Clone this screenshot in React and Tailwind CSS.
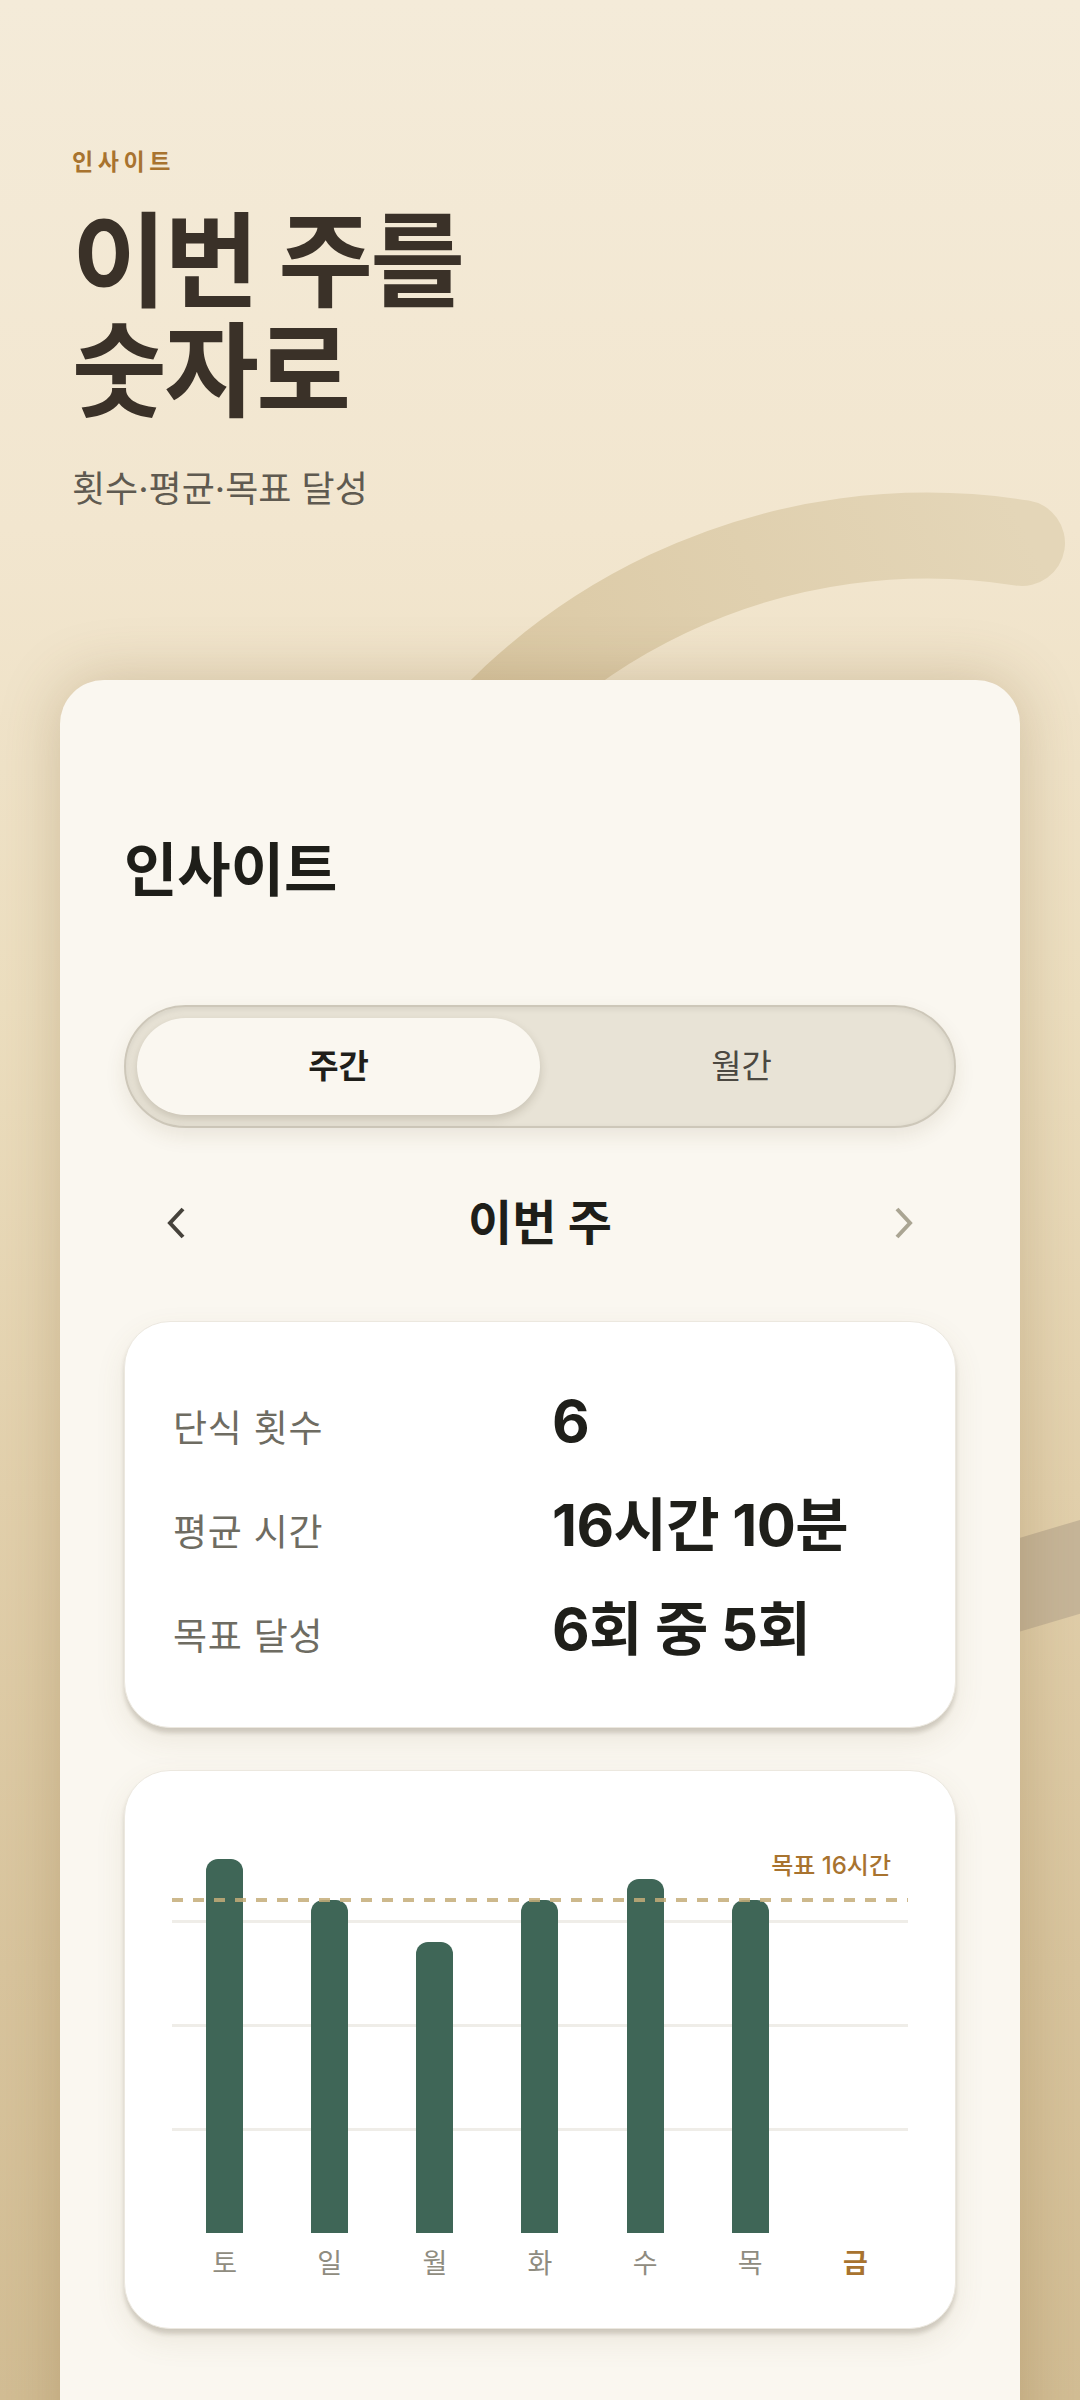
import React from 'react';

const days = [
    { label: '토', hours: 18 },
    { label: '일', hours: 16 },
    { label: '월', hours: 14 },
    { label: '화', hours: 16 },
    { label: '수', hours: 17 },
    { label: '목', hours: 16 },
    { label: '금', hours: 0, today: true },
];

const HOUR_PX = 20.8;

const stats = [
    { label: '단식 횟수', value: '6' },
    { label: '평균 시간', value: '16시간 10분' },
    { label: '목표 달성', value: '6회 중 5회' },
];

const Chevron = ({ dir = 'left', color }) => (
    <svg width="20" height="32" viewBox="0 0 20 32" fill="none">
        <path
            d={dir === 'left' ? 'M17 2 L4 16 L17 30' : 'M3 2 L16 16 L3 30'}
            stroke={color}
            strokeWidth="4"
            strokeLinejoin="miter"
        />
    </svg>
);

const BackgroundArcs = () => (
    <svg className="absolute inset-0" width="1080" height="2400" viewBox="0 0 1080 2400" fill="none">
        <defs>
            <linearGradient id="arcFill" x1="400" y1="840" x2="1030" y2="540" gradientUnits="userSpaceOnUse">
                <stop offset="0" stopColor="#d9c6a0" />
                <stop offset="1" stopColor="#e4d6b8" />
            </linearGradient>
        </defs>
        <path d="M 404 835 A 607 607 0 0 1 1022 543" stroke="url(#arcFill)" strokeWidth="86" strokeLinecap="round" />
        <path d="M 800 1650 L 1130 1552" stroke="#c6b598" strokeWidth="90" />
    </svg>
);

const cardShadow = 'shadow-[0_5px_4px_rgba(60,50,30,0.18),0_12px_30px_rgba(120,100,60,0.10)]';

const StatsCard = () => (
    <div className={`mt-[66px] rounded-[46px] bg-white border border-[#ece8df] ${cardShadow} pl-[48px] pt-[64px] pb-[63px] flex flex-col gap-[34px]`}>
        {stats.map((s) => (
            <div key={s.label} className="h-[70px] flex items-baseline">
                <div className="w-[379px] text-[37px] leading-[70px] tracking-[0.02em] text-[#6e6c62]">{s.label}</div>
                <div className="text-[58px] leading-[70px] font-bold tracking-[-0.01em] text-[#1f1f1a]">{s.value}</div>
            </div>
        ))}
    </div>
);

const ChartCard = () => (
    <div className={`mt-[42px] rounded-[46px] bg-white border border-[#ece8df] ${cardShadow} px-[47px] pt-[46px] pb-[46px]`}>
        <div className="relative h-[416px]">
            {[102, 206, 310].map((b) => (
                <div key={b} className="absolute left-0 right-0 h-[3px] bg-[#efede8]" style={{ bottom: b }} />
            ))}
            <div className="absolute inset-0 flex items-end">
                {days.map((d) => (
                    <div key={d.label} className="flex-1 flex justify-center">
                        {d.hours > 0 && (
                            <div className="w-[37px] rounded-t-[12px] bg-[#3f6657]" style={{ height: d.hours * HOUR_PX }} />
                        )}
                    </div>
                ))}
            </div>
            <div className="absolute left-0 right-0 bottom-[331px] h-[4px] bg-[repeating-linear-gradient(90deg,rgba(196,172,120,0.85)_0_11px,transparent_11px_21px)]" />
            <div className="absolute right-[17px] top-[33px] text-[24px] leading-[32px] font-medium text-[#a8732f]">목표 16시간</div>
        </div>
        <div className="mt-[13px] flex">
            {days.map((d) => (
                <div
                    key={d.label}
                    className={
                        d.today
                            ? 'flex-1 text-center text-[27px] leading-[36px] font-bold text-[#a8732f]'
                            : 'flex-1 text-center text-[27px] leading-[36px] text-[#8f8c80]'
                    }
                >
                    {d.label}
                </div>
            ))}
        </div>
    </div>
);

export default function App() {
    return (
        <div className="relative w-[1080px] h-[2400px] overflow-hidden font-['Inter','Noto_Sans_CJK_KR',sans-serif] bg-[linear-gradient(180deg,#f4ebd9_0%,#f2e6cf_22%,#ecdebf_42%,#e2d0ac_62%,#d8c49d_82%,#d2bd94_100%)]">
            <BackgroundArcs />

            <div className="relative pt-[147px] px-[72px]">
                <div className="text-[23px] leading-[30px] font-bold tracking-[0.2em] text-[#a8732f]">인사이트</div>
                <h1 className="mt-[30px] text-[103px] leading-[110px] font-bold tracking-[-0.025em] text-[#3a3128]">
                    이번 주를
                    <br />
                    숫자로
                </h1>
                <p className="mt-[40px] text-[36px] leading-[44px] text-[#5f5a50]">횟수·평균·목표 달성</p>
            </div>

            <div className="relative mx-[60px] mt-[169px] rounded-t-[44px] bg-[#faf7f0] shadow-[0_0_60px_rgba(110,80,30,0.25)] px-[64px] pt-[157px] h-[1800px]">
                <h2 className="text-[58px] leading-[66px] font-bold text-[#1e1e19]">인사이트</h2>

                <div className="mt-[102px] h-[123px] rounded-full bg-[#e8e3d6] border-2 border-[#cdc7b9] shadow-[inset_0_2px_6px_rgba(0,0,0,0.08),0_8px_20px_rgba(90,70,30,0.10)] p-[11px] flex">
                    <div className="w-1/2 rounded-full bg-[#faf7f0] shadow-[0_4px_10px_rgba(60,50,30,0.18)] flex items-center justify-center text-[33px] font-semibold text-[#1f1e1a]">
                        주간
                    </div>
                    <div className="w-1/2 flex items-center justify-center text-[33px] text-[#4b4841]">월간</div>
                </div>

                <div className="mt-[63px] h-[64px] px-[42px] flex items-center justify-between">
                    <Chevron dir="left" color="#45423b" />
                    <div className="text-[48px] leading-[64px] font-bold text-[#1e1e19]">이번 주</div>
                    <Chevron dir="right" color="#aaa593" />
                </div>

                <StatsCard />
                <ChartCard />
            </div>
        </div>
    );
}
